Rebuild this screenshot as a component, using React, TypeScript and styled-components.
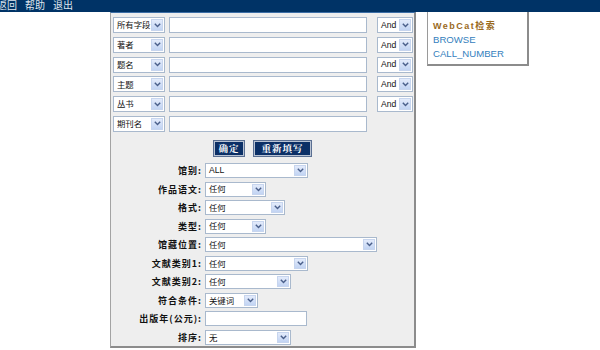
import React from "react";
import styled, { createGlobalStyle } from "styled-components";

const Global = createGlobalStyle`
  html, body { margin: 0; padding: 0; background: #ffffff; }
  body { font-family: "Liberation Sans", "Noto Sans CJK SC", sans-serif; }
  * { box-sizing: border-box; }
`;

const TopBar = styled.div`
  height: 12px;
  background: #003366;
  display: flex;
  align-items: center;
  gap: 8px;
`;

const NavLink = styled.span<{ $first?: boolean }>`
  display: block;
  height: 12px;
  color: #dfe6ee;
  font-family: "Liberation Sans", "Noto Sans CJK SC", sans-serif;
  font-size: 10px;
  line-height: 12px;
  margin-left: ${(p) => (p.$first ? "-3px" : "0")};
`;

const Main = styled.div`
  display: flex;
  align-items: flex-start;
  padding-left: 110px;
  gap: 11px;
`;

const Panel = styled.div`
  width: 306px;
  background: #eeeeee;
  border-top: 1px solid #3c6ea6;
  border-left: 1px solid #a3a3a3;
  border-right: 2px solid #8c8c8c;
  border-bottom: 2px solid #8c8c8c;
  padding: 4px 0 1px 2px;
  display: flex;
  flex-direction: column;
`;

const TermRows = styled.div`
  display: flex;
  flex-direction: column;
  gap: 3.8px;
`;

const TermRow = styled.div`
  display: flex;
  align-items: center;
  height: 16px;
`;

const SelectBox = styled.div<{ $w: number; $h?: number }>`
  width: ${(p) => p.$w}px;
  height: ${(p) => p.$h ?? 16}px;
  flex: none;
  background: #ffffff;
  border: 1px solid #a9b9cd;
  display: flex;
  align-items: stretch;
  padding: 1px;
`;

const SelectText = styled.span<{ $latin?: boolean }>`
  flex: 1;
  padding-left: 2px;
  padding-bottom: ${(p) => (p.$latin ? "0" : "1px")};
  font-family: ${(p) =>
    p.$latin ? `"Liberation Sans", Arial, sans-serif` : `"Noto Sans CJK SC", sans-serif`};
  font-size: ${(p) => (p.$latin ? "8.6px" : "8.4px")};
  line-height: 1;
  color: #111;
  display: flex;
  align-items: center;
  white-space: nowrap;
  overflow: hidden;
`;

const ArrowBtn = styled.span`
  width: 12px;
  flex: none;
  background: linear-gradient(180deg, #e3ebfb 0%, #c2d4f3 100%);
  border: 1px solid #c7d5ee;
  display: flex;
  align-items: center;
  justify-content: center;
`;

const TextBox = styled.div<{ $w: number; $h?: number }>`
  width: ${(p) => p.$w}px;
  height: ${(p) => p.$h ?? 16}px;
  flex: none;
  background: #ffffff;
  border: 1px solid #a9b9cd;
`;

const Spacer = styled.span<{ $w: number }>`
  width: ${(p) => p.$w}px;
  flex: none;
`;

const ButtonRow = styled.div`
  display: flex;
  justify-content: center;
  gap: 10px;
  margin-top: 8px;
  padding-right: 2px;
`;

const NavyButton = styled.div<{ $w: number }>`
  width: ${(p) => p.$w}px;
  height: 15px;
  background: #0b2f66;
  border: 1px solid #b9c3d3;
  outline: 1px solid #5a6f92;
  color: #ffffff;
  font-family: "Noto Serif CJK SC", "Noto Sans CJK SC", serif;
  font-weight: 700;
  font-size: 9.5px;
  letter-spacing: 1px;
  display: flex;
  align-items: center;
  justify-content: center;
  margin-top: 1px;
`;

const OptionGrid = styled.div`
  display: grid;
  grid-template-columns: 89px auto;
  column-gap: 3px;
  row-gap: 3.55px;
  margin-top: 7px;
  justify-items: start;
  align-items: center;
`;

const OptLabel = styled.span`
  justify-self: end;
  font-family: "Noto Sans CJK SC", sans-serif;
  font-weight: 700;
  font-size: 9px;
  letter-spacing: 1px;
  color: #111;
  line-height: 15px;
  white-space: nowrap;
`;

const SideBox = styled.div`
  width: 102px;
  height: 54px;
  background: #ffffff;
  border-left: 1px solid #9a9a9a;
  border-right: 2px solid #8c8c8c;
  border-bottom: 2px solid #8c8c8c;
  padding: 8px 0 0 5px;
  display: flex;
  flex-direction: column;
`;

const SideTitle = styled.span`
  font-family: "Liberation Sans", "Noto Sans CJK SC", sans-serif;
  font-weight: 700;
  font-size: 9px;
  letter-spacing: 1.5px;
  color: #9a6a1c;
  line-height: 13px;
`;

const SideLink = styled.span`
  font-family: "Liberation Sans", Arial, sans-serif;
  font-size: 9.6px;
  color: #3480bd;
  line-height: 13.5px;
`;

const Chevron = () => (
  <svg width="7" height="5" viewBox="0 0 7 5">
    <path d="M0.8 0.8 L3.5 3.6 L6.2 0.8" fill="none" stroke="#4a5f8a" strokeWidth="1.4" />
  </svg>
);

const Select = ({ w, text, h, latin }: { w: number; text: string; h?: number; latin?: boolean }) => (
  <SelectBox $w={w} $h={h}>
    <SelectText $latin={latin}>{text}</SelectText>
    <ArrowBtn>
      <Chevron />
    </ArrowBtn>
  </SelectBox>
);

const terms: { field: string; and: boolean }[] = [
  { field: "所有字段", and: true },
  { field: "著者", and: true },
  { field: "题名", and: true },
  { field: "主题", and: true },
  { field: "丛书", and: true },
  { field: "期刊名", and: false },
];

type Opt = { label: string; kind: "select" | "text"; w: number; value?: string; latin?: boolean };

const options: Opt[] = [
  { label: "馆别:", kind: "select", w: 103, value: "ALL", latin: true },
  { label: "作品语文:", kind: "select", w: 61, value: "任何" },
  { label: "格式:", kind: "select", w: 80, value: "任何" },
  { label: "类型:", kind: "select", w: 61, value: "任何" },
  { label: "馆藏位置:", kind: "select", w: 172, value: "任何" },
  { label: "文献类别1:", kind: "select", w: 103, value: "任何" },
  { label: "文献类别2:", kind: "select", w: 86, value: "任何" },
  { label: "符合条件:", kind: "select", w: 53, value: "关键词" },
  { label: "出版年(公元):", kind: "text", w: 102 },
  { label: "排序:", kind: "select", w: 86, value: "无" },
];

export default function App() {
  return (
    <>
      <Global />
      <TopBar>
        <NavLink $first>返回</NavLink>
        <NavLink>帮助</NavLink>
        <NavLink>退出</NavLink>
      </TopBar>
      <Main>
        <Panel>
          <TermRows>
            {terms.map((t) => (
              <TermRow key={t.field}>
                <Select w={52} text={t.field} />
                <Spacer $w={4} />
                <TextBox $w={198} />
                {t.and && (
                  <>
                    <Spacer $w={10} />
                    <Select w={36} text="And" latin />
                  </>
                )}
              </TermRow>
            ))}
          </TermRows>
          <ButtonRow>
            <NavyButton $w={30}>确定</NavyButton>
            <NavyButton $w={57}>重新填写</NavyButton>
          </ButtonRow>
          <OptionGrid>
            {options.map((o) => (
              <React.Fragment key={o.label}>
                <OptLabel>{o.label}</OptLabel>
                {o.kind === "select" ? (
                  <Select w={o.w} h={15} text={o.value ?? ""} latin={o.latin} />
                ) : (
                  <TextBox $w={o.w} $h={15} />
                )}
              </React.Fragment>
            ))}
          </OptionGrid>
        </Panel>
        <SideBox>
          <SideTitle>WebCat检索</SideTitle>
          <SideLink>BROWSE</SideLink>
          <SideLink>CALL_NUMBER</SideLink>
        </SideBox>
      </Main>
    </>
  );
}
